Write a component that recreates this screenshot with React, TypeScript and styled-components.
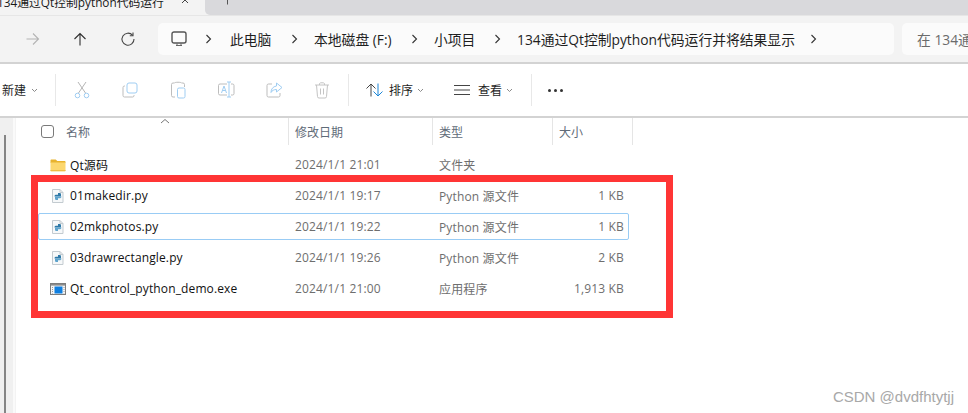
import { Fragment, ReactNode } from "react";
import styled, { createGlobalStyle } from "styled-components";

const GlobalStyle = createGlobalStyle`
  html, body {
    margin: 0;
    padding: 0;
    background: #fff;
    overflow: hidden;
  }
  body {
    font-family: "Open Sans", "Noto Sans CJK SC", sans-serif;
    color: #1a1a1a;
  }
`;

const Window = styled.div`
  position: relative;
  width: 968px;
  height: 413px;
  overflow: hidden;
  display: flex;
  flex-direction: column;
`;

/* tab strip */
const TabStrip = styled.div`
  height: 15px;
  flex: none;
  display: flex;
  background: #f3f3f3;
  border-bottom: 1px solid #e6e6e6;
`;

const ActiveTab = styled.div`
  width: 205px;
  height: 15px;
  flex: none;
  display: flex;
  align-items: flex-end;
  justify-content: space-between;
  padding-right: 14px;
  box-sizing: border-box;
  overflow: hidden;
  font-size: 11.8px;
  line-height: 17px;
  white-space: nowrap;
`;

const TabTitle = styled.span`
  display: block;
  width: 168px;
  margin-left: -3px;
  margin-bottom: 4px;
`;

const TabRest = styled.div`
  flex: 1;
  background: #d9d9dc;
  border-bottom-left-radius: 5px;
  padding-left: 22px;
`;

/* address row */
const AddressRow = styled.div`
  height: 46px;
  flex: none;
  display: flex;
  align-items: center;
  background: #f3f3f3;
  border-bottom: 2px solid #d3d3d3;
`;

const NavButtons = styled.div`
  width: 158px;
  flex: none;
  display: flex;
  gap: 32px;
  padding-left: 24px;
  box-sizing: border-box;
`;

const AddressBox = styled.div`
  width: 736px;
  height: 32px;
  flex: none;
  display: flex;
  align-items: center;
  background: #fbfbfb;
  border-radius: 5px;
  padding-left: 13px;
  box-sizing: border-box;
  font-size: 13.8px;
  white-space: nowrap;
`;

const Crumb = styled.span<{ $w: number }>`
  width: ${(p) => p.$w}px;
  flex: none;
  color: #1f1f1f;
`;

const ChevronSlot = styled.span<{ $w: number }>`
  width: ${(p) => p.$w}px;
  flex: none;
  display: flex;
`;

const SearchBox = styled.div`
  flex: 1;
  height: 32px;
  margin-left: 8px;
  display: flex;
  align-items: center;
  padding-left: 15px;
  background: #fbfbfb;
  border-radius: 5px 0 0 5px;
  font-size: 13.8px;
  color: #6b6b6b;
  white-space: nowrap;
  overflow: hidden;
`;

/* command bar */
const CommandBar = styled.div`
  height: 54px;
  flex: none;
  display: flex;
  align-items: center;
  background: #fff;
  border-bottom: 2px solid #d3d3d3;
  box-sizing: border-box;
  font-size: 12px;
`;

const CommandLabel = styled.span`
  color: #1f1f1f;
  font-size: 12px;
  white-space: nowrap;
`;

const NewGroup = styled.div`
  width: 55px;
  flex: none;
  display: flex;
  align-items: center;
  gap: 5px;
  padding-left: 2px;
  box-sizing: border-box;
`;

const Divider = styled.div`
  width: 1px;
  height: 32px;
  flex: none;
  background: #e8e8e8;
`;

const ActionGroup = styled.div`
  width: 292px;
  flex: none;
  display: flex;
  gap: 28px;
  padding-left: 16px;
  box-sizing: border-box;
`;

const SortGroup = styled.div`
  width: 182px;
  flex: none;
  display: flex;
  align-items: center;
  padding-left: 16px;
  box-sizing: border-box;
`;

const MenuButton = styled.div<{ $w: number; $gap: number }>`
  width: ${(p) => p.$w}px;
  flex: none;
  display: flex;
  align-items: center;
  gap: ${(p) => p.$gap}px;
`;

const LabelWithChevron = styled.span`
  display: flex;
  align-items: center;
  gap: 4px;
`;

const More = styled.div`
  margin-left: 16px;
  display: flex;
  gap: 3px;
`;

const Dot = styled.span`
  width: 3px;
  height: 3px;
  border-radius: 50%;
  background: #333;
`;

/* content */
const Content = styled.div`
  flex: 1;
  display: flex;
  min-height: 0;
`;

const Sidebar = styled.div`
  width: 15px;
  flex: none;
  display: flex;
  padding: 17px 0 0 4px;
  box-sizing: border-box;
  background: linear-gradient(to right, #f0f0f0 13px, #fafafa 13px, #fafafa 15px);
`;

const SideThumb = styled.div`
  width: 2px;
  height: 100%;
  background: #858585;
`;

const ListPane = styled.div`
  flex: 1;
  border-left: 1px solid #f3f3f3;
`;

const HeaderRow = styled.div`
  position: relative;
  height: 27px;
  display: grid;
  grid-template-columns: 273px 144px 120px 80px;
  font-size: 12px;
  color: #5f6b78;
`;

const HeaderCell = styled.div<{ $first?: boolean }>`
  display: flex;
  align-items: center;
  gap: 12px;
  height: 27px;
  box-sizing: border-box;
  padding-left: ${(p) => (p.$first ? "25px" : "6px")};
  border-right: 1px solid #e5e5e5;
`;

const Checkbox = styled.span`
  width: 11px;
  height: 11px;
  border: 1px solid #7a7a7a;
  border-radius: 3px;
  flex: none;
`;

const SortCaret = styled.svg`
  position: absolute;
  left: 144px;
  top: 0;
`;

const RowList = styled.div`
  display: flex;
  flex-direction: column;
  gap: 4px;
  padding: 6px 0 0 22px;
`;

const Row = styled.div<{ $focused?: boolean }>`
  width: 591px;
  height: 27px;
  display: grid;
  grid-template-columns: 256px 144px 113px 1fr;
  align-items: center;
  box-sizing: border-box;
  font-size: 12px;
  border: 1px solid ${(p) => (p.$focused ? "#99ccf5" : "transparent")};
  border-radius: 2px;
`;

const NameCell = styled.div`
  display: flex;
  align-items: center;
  gap: 4px;
  padding-left: 11px;
  color: #111;
  white-space: nowrap;
  letter-spacing: 0.13px;
`;

const MetaCell = styled.div`
  color: #6e6e6e;
  white-space: nowrap;
  letter-spacing: 0.15px;
`;

const SizeCell = styled(MetaCell)`
  text-align: right;
  padding-right: 4px;
`;

const Highlight = styled.div`
  position: absolute;
  left: 31px;
  top: 175px;
  width: 642px;
  height: 143px;
  box-sizing: border-box;
  border: 7px solid #ff3535;
  pointer-events: none;
`;

const Watermark = styled.div`
  position: absolute;
  right: 14px;
  bottom: 8px;
  font-family: "Liberation Sans", sans-serif;
  font-size: 15px;
  color: #a8a8a8;
`;

const Icon = ({ w = 16, h = 16, children }: { w?: number; h?: number; children: ReactNode }) => (
  <svg width={w} height={h} viewBox={`0 0 ${w} ${h}`} fill="none" style={{ display: "block", flex: "none" }}>
    {children}
  </svg>
);

const Chevron = () => (
  <Icon w={7} h={10}>
    <path d="M1.5 1l4 4-4 4" stroke="#333" strokeWidth="1.1" />
  </Icon>
);

const SmallChevron = () => (
  <Icon w={7} h={5}>
    <path d="M1 1l2.5 2.5L6 1" stroke="#8a8a8a" strokeWidth="1" />
  </Icon>
);

const PyIcon = () => (
  <Icon>
    <path d="M2.5 1.500h7.500l3 3v10h-10.500z" fill="#f6f8f9" stroke="#c3cbd0" />
    <path d="M10 1.500v3h3" stroke="#c3cbd0" />
    <path d="M4.500 8.500c0-1.400.9-1.700 2-1.700h1.500V5h1.700c.9 0 1.300.7 1.300 1.500v2H7.500z" fill="#2f79a8" />
    <path d="M11.500 8.500c0 1.400-.9 1.700-2 1.700H8V12H6.300c-.9 0-1.300-.7-1.300-1.500v-2h3.500z" fill="#5ea3cc" />
  </Icon>
);

const FolderIcon = () => (
  <Icon>
    <path d="M0.500 3.500c0-.6.4-1 1-1h4.200l1.600 1.500h7.200c.6 0 1 .4 1 1v1H.5z" fill="#e8b32e" />
    <path d="M.5 5.500h15v8c0 .6-.4 1-1 1h-13c-.6 0-1-.4-1-1z" fill="#fcd76e" />
    <path d="M.5 13.500h15" stroke="#eebd45" />
  </Icon>
);

const ExeIcon = () => (
  <Icon>
    <rect x="0.5" y="2.5" width="15" height="11" fill="#f5f5f5" stroke="#7d7d7d" />
    <rect x="1" y="3" width="14" height="1.6" fill="#8a8a8a" />
    <rect x="4.5" y="5.5" width="8" height="7" fill="#0f7fe0" />
    <path d="M2.500 6v6.500M14 6v6.500" stroke="#9a9a9a" strokeDasharray="1 1" />
  </Icon>
);

const files = [
  { name: "Qt源码", date: "2024/1/1 21:01", type: "文件夹", size: "", icon: <FolderIcon /> },
  { name: "01makedir.py", date: "2024/1/1 19:17", type: "Python 源文件", size: "1 KB", icon: <PyIcon /> },
  { name: "02mkphotos.py", date: "2024/1/1 19:22", type: "Python 源文件", size: "1 KB", icon: <PyIcon />, focused: true },
  { name: "03drawrectangle.py", date: "2024/1/1 19:26", type: "Python 源文件", size: "2 KB", icon: <PyIcon /> },
  { name: "Qt_control_python_demo.exe", date: "2024/1/1 21:00", type: "应用程序", size: "1,913 KB", icon: <ExeIcon /> },
];

const crumbs = [
  { label: "此电脑", w: 61 },
  { label: "本地磁盘 (F:)", w: 97 },
  { label: "小项目", w: 60 },
  { label: "134通过Qt控制python代码运行并将结果显示", w: 293 },
];

const App = () => (
  <>
    <GlobalStyle />
    <Window>
      <TabStrip>
        <ActiveTab>
          <TabTitle>134通过Qt控制python代码运行</TabTitle>
          <Icon w={10} h={15}>
            <path d="M1 -3l6 6M7 -3l-6 6" stroke="#444" />
          </Icon>
        </ActiveTab>
        <TabRest>
          <Icon w={2} h={5}>
            <path d="M.5 0v4.500" stroke="#555" />
          </Icon>
        </TabRest>
      </TabStrip>

      <AddressRow>
        <NavButtons>
          <Icon>
            <path d="M2.500 8h12M9 2.500L14.500 8 9 13.500" stroke="#b4b4b4" strokeWidth="1.1" />
          </Icon>
          <Icon>
            <path d="M8 14.500v-12M2.500 8L8 2.500 13.500 8" stroke="#2e2e2e" strokeWidth="1.1" />
          </Icon>
          <Icon>
            <path d="M12.500 4.200A6 6 0 1 0 14 8" stroke="#444" strokeWidth="1.1" />
            <path d="M13 1.500v3.200H9.800" stroke="#444" strokeWidth="1.1" />
          </Icon>
        </NavButtons>
        <AddressBox>
          <ChevronSlot $w={34}>
            <Icon w={16} h={16}>
              <rect x="1" y="1" width="14" height="11" rx="2" stroke="#555" strokeWidth="1.4" />
              <path d="M5 14.500h6M6 12.500v2M10 12.500v2" stroke="#666" />
            </Icon>
          </ChevronSlot>
          <ChevronSlot $w={25}>
            <Chevron />
          </ChevronSlot>
          {crumbs.map((c) => (
            <Fragment key={c.label}>
              <Crumb $w={c.w}>{c.label}</Crumb>
              <ChevronSlot $w={23}>
                <Chevron />
              </ChevronSlot>
            </Fragment>
          ))}
        </AddressBox>
        <SearchBox>在 134通过</SearchBox>
      </AddressRow>

      <CommandBar>
        <NewGroup>
          <CommandLabel>新建</CommandLabel>
          <SmallChevron />
        </NewGroup>
        <Divider />
        <ActionGroup>
          <Icon w={20} h={20}>
            <path d="M6 2l7.500 11M14 2L6.500 13" stroke="#b5b5b5" strokeWidth="1" />
            <circle cx="5.500" cy="15.500" r="2.300" stroke="#9fcdf2" />
            <circle cx="14.500" cy="15.500" r="2.300" stroke="#9fcdf2" />
          </Icon>
          <Icon w={20} h={20}>
            <path d="M5 6H4.500A1.500 1.500 0 0 0 3 7.500v8A1.500 1.500 0 0 0 4.500 17h8a1.500 1.500 0 0 0 1.500-1.500V15" stroke="#bdbdbd" />
            <rect x="7" y="3" width="10" height="10" rx="2" stroke="#9fcdf2" />
          </Icon>
          <Icon w={20} h={20}>
            <path d="M7 17H5a1.500 1.500 0 0 1-1.500-1.500v-11A1.500 1.500 0 0 1 5 3h1.500c0-1 7-1 7 0H15a1.500 1.500 0 0 1 1.500 1.500V7" stroke="#bdbdbd" />
            <rect x="9.500" y="8" width="7.500" height="10" rx="1.500" stroke="#9fcdf2" />
          </Icon>
          <Icon w={20} h={20}>
            <path d="M11 4H4a1.500 1.500 0 0 0-1.500 1.500v8A1.500 1.500 0 0 0 4 15h7M15 4h1.500A1.500 1.500 0 0 1 18 5.500v8a1.500 1.500 0 0 1-1.500 1.500H15" stroke="#bdbdbd" />
            <path d="M13 2v15M11 2h4M11 17h4" stroke="#9fcdf2" />
            <path d="M5.500 13l2.500-7 2.500 7M6.500 10.500h3" stroke="#9fcdf2" />
          </Icon>
          <Icon w={20} h={20}>
            <path d="M8 4H4.500A1.500 1.500 0 0 0 3 5.500v10A1.500 1.500 0 0 0 4.500 17h10a1.500 1.500 0 0 0 1.500-1.500V13" stroke="#bdbdbd" />
            <path d="M12.500 3l5.500 4.500-5.500 4.500V9.500c-2.500 0-4.500 1-5.500 3 0-3.500 2-6 5.500-6.500z" stroke="#9fcdf2" />
          </Icon>
          <Icon w={20} h={20}>
            <path d="M3 5h14M7.500 5V3.500c0-1 5-1 5 0V5M4.500 5l1 11.500a1.500 1.500 0 0 0 1.500 1.500h6a1.500 1.500 0 0 0 1.500-1.500l1-11.500M8.500 8.500v6M11.500 8.500v6" stroke="#c4c4c4" />
          </Icon>
        </ActionGroup>
        <Divider />
        <SortGroup>
          <MenuButton $w={88} $gap={4}>
            <Icon w={20} h={16}>
              <path d="M6 14.500V2M1.500 6.500L6 2l4.500 4.500" stroke="#444" />
              <path d="M13 1.500V14M8.500 9.500L13 14l4.500-4.500" stroke="#1a86d8" />
            </Icon>
            <LabelWithChevron>
              <CommandLabel>排序</CommandLabel>
              <SmallChevron />
            </LabelWithChevron>
          </MenuButton>
          <MenuButton $w={76} $gap={5}>
            <Icon w={20} h={14}>
              <path d="M1 2.500h16M1 7h16M1 11.500h16" stroke="#444" />
            </Icon>
            <LabelWithChevron>
              <CommandLabel>查看</CommandLabel>
              <SmallChevron />
            </LabelWithChevron>
          </MenuButton>
        </SortGroup>
        <Divider />
        <More>
          <Dot />
          <Dot />
          <Dot />
        </More>
      </CommandBar>

      <Content>
        <Sidebar>
          <SideThumb />
        </Sidebar>
        <ListPane>
          <HeaderRow>
            <HeaderCell $first>
              <Checkbox />
              名称
            </HeaderCell>
            <HeaderCell>修改日期</HeaderCell>
            <HeaderCell>类型</HeaderCell>
            <HeaderCell>大小</HeaderCell>
            <SortCaret width="10" height="6" viewBox="0 0 10 6" fill="none">
              <path d="M1 5l4-3.500L9 5" stroke="#777" />
            </SortCaret>
          </HeaderRow>
          <RowList>
            {files.map((f) => (
              <Row key={f.name} $focused={f.focused}>
                <NameCell>
                  {f.icon}
                  {f.name}
                </NameCell>
                <MetaCell>{f.date}</MetaCell>
                <MetaCell>{f.type}</MetaCell>
                <SizeCell>{f.size}</SizeCell>
              </Row>
            ))}
          </RowList>
        </ListPane>
      </Content>

      <Highlight />
      <Watermark>CSDN @dvdfhtytjj</Watermark>
    </Window>
  </>
);

export default App;
